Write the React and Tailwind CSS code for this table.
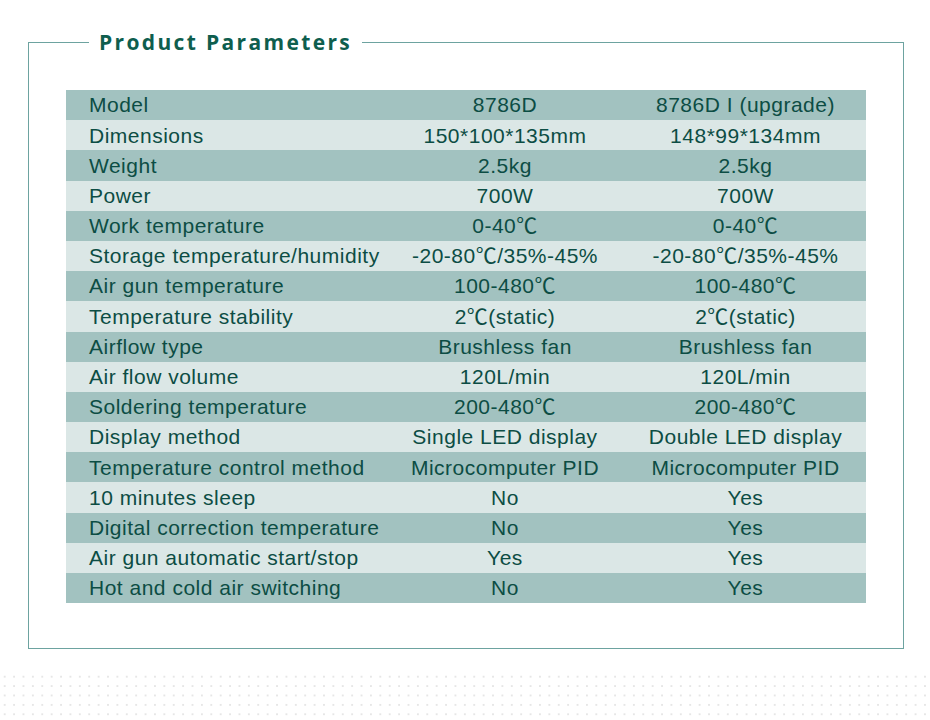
const rows = [
  ["Model", "8786D", "8786D I (upgrade)"],
  ["Dimensions", "150*100*135mm", "148*99*134mm"],
  ["Weight", "2.5kg", "2.5kg"],
  ["Power", "700W", "700W"],
  ["Work temperature", "0-40℃", "0-40℃"],
  ["Storage temperature/humidity", "-20-80℃/35%-45%", "-20-80℃/35%-45%"],
  ["Air gun temperature", "100-480℃", "100-480℃"],
  ["Temperature stability", "2℃(static)", "2℃(static)"],
  ["Airflow type", "Brushless fan", "Brushless fan"],
  ["Air flow volume", "120L/min", "120L/min"],
  ["Soldering temperature", "200-480℃", "200-480℃"],
  ["Display method", "Single LED display", "Double LED display"],
  ["Temperature control method", "Microcomputer PID", "Microcomputer PID"],
  ["10 minutes sleep", "No", "Yes"],
  ["Digital correction temperature", "No", "Yes"],
  ["Air gun automatic start/stop", "Yes", "Yes"],
  ["Hot and cold air switching", "No", "Yes"],
];

export default function App() {
  return (
    <div className="w-[930px] h-[720px] bg-white overflow-hidden relative">
      <div className="pt-[32px] pl-[28px]">
        <fieldset className="w-[875px] h-[617px] border-[1.5px] border-[#6da3a0] px-[37px] pt-[38px]">
          <legend className="ml-[23px] px-[10px] font-['Open_Sans',sans-serif] font-bold text-[21px] leading-[20px] tracking-[2.35px] text-[#0e5e4e]">
            Product Parameters
          </legend>
          <div className="w-[800px] font-['Liberation_Sans','Noto_Sans_CJK_SC',Arial,sans-serif] text-[21px] tracking-[0.5px] text-[#0c4d44]">
            {rows.map((r, i) => (
              <div
                key={r[0]}
                className={`flex h-[30.2px] items-center ${i % 2 === 0 ? "bg-[#a2c2c0]" : "bg-[#dbe7e6]"}`}
              >
                <div className="w-[319px] pl-[23px] whitespace-nowrap">{r[0]}</div>
                <div className="w-[240px] text-center whitespace-nowrap">{r[1]}</div>
                <div className="w-[241px] text-center whitespace-nowrap">{r[2]}</div>
              </div>
            ))}
          </div>
        </fieldset>
      </div>
      <div className="absolute left-0 right-0 top-[672px] bottom-0 bg-[radial-gradient(#e6e6e6_1px,transparent_1.2px)] bg-[size:9.4px_9.4px]" />
    </div>
  );
}
